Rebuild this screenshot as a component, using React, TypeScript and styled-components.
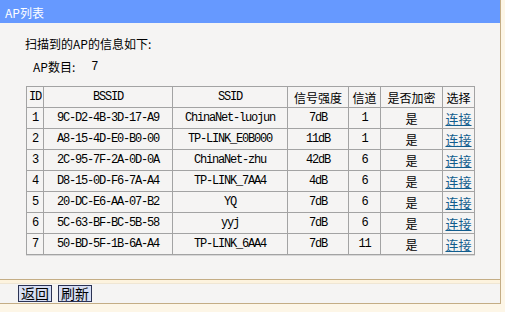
import styled, { createGlobalStyle } from 'styled-components';

interface ApRow {
  id: number;
  bssid: string;
  ssid: string;
  signal: string;
  channel: number;
}

const apList: ApRow[] = [
  { id: 1, bssid: '9C-D2-4B-3D-17-A9', ssid: 'ChinaNet-luojun', signal: '7dB', channel: 1 },
  { id: 2, bssid: 'A8-15-4D-E0-B0-00', ssid: 'TP-LINK_E0B000', signal: '11dB', channel: 1 },
  { id: 3, bssid: '2C-95-7F-2A-0D-0A', ssid: 'ChinaNet-zhu', signal: '42dB', channel: 6 },
  { id: 4, bssid: 'D8-15-0D-F6-7A-A4', ssid: 'TP-LINK_7AA4', signal: '4dB', channel: 6 },
  { id: 5, bssid: '20-DC-E6-AA-07-B2', ssid: 'YQ', signal: '7dB', channel: 6 },
  { id: 6, bssid: '5C-63-BF-BC-5B-58', ssid: 'yyj', signal: '7dB', channel: 6 },
  { id: 7, bssid: '50-BD-5F-1B-6A-A4', ssid: 'TP-LINK_6AA4', signal: '7dB', channel: 11 },
];

const columns = [17, 129, 115, 61, 32, 62, 32];

function App() {
  return (
    <>
      <GlobalStyle />
      <Page>
        <Header>AP列表</Header>
        <Content>
          <Heading>扫描到的AP的信息如下:</Heading>
          <CountLine>
            AP数目:<Count>7</Count>
          </CountLine>
          <Table>
            <colgroup>
              {columns.map((w, i) => (
                <col key={i} style={{ width: w }} />
              ))}
            </colgroup>
            <thead>
              <tr>
                <HeadCell $mono>ID</HeadCell>
                <HeadCell $mono>BSSID</HeadCell>
                <HeadCell $mono>SSID</HeadCell>
                <HeadCell>信号强度</HeadCell>
                <HeadCell>信道</HeadCell>
                <HeadCell>是否加密</HeadCell>
                <HeadCell>选择</HeadCell>
              </tr>
            </thead>
            <tbody>
              {apList.map((ap) => (
                <tr key={ap.id}>
                  <Cell $mono>{ap.id}</Cell>
                  <Cell $mono>{ap.bssid}</Cell>
                  <Cell $mono>{ap.ssid}</Cell>
                  <Cell $mono>{ap.signal}</Cell>
                  <Cell $mono>{ap.channel}</Cell>
                  <Cell>是</Cell>
                  <Cell>
                    <Link href="#">连接</Link>
                  </Cell>
                </tr>
              ))}
            </tbody>
          </Table>
        </Content>
        <Spacer />
        <ButtonBar>
          <Button>返回</Button>
          <Button>刷新</Button>
        </ButtonBar>
      </Page>
    </>
  );
}

const GlobalStyle = createGlobalStyle`
  body {
    margin: 0;
    background: #fdf6e7;
    font-family: "Noto Sans CJK SC", "Liberation Sans", sans-serif;
    font-size: 12px;
    color: #000;
  }
`;

const Page = styled.div`
  display: flex;
  flex-direction: column;
  width: 500px;
  border-right: 1px solid #c4ad85;
`;

const Header = styled.div`
  height: 23px;
  padding-left: 5px;
  background: #6699ff;
  color: #fff;
  font-size: 12px;
  line-height: 25px;
`;

const Content = styled.div`
  display: flex;
  flex-direction: column;
  height: 257px;
  padding: 13px 0 0 25px;
  box-sizing: border-box;
  background: #f5f4f3;
  border-bottom: 1px solid #c4ad85;
`;

const Heading = styled.div`
  line-height: 16px;
  font-size: 12px;
`;

const CountLine = styled.div`
  display: flex;
  margin: 7px 0 0 8px;
  line-height: 16px;
`;

const Count = styled.span`
  margin-left: 16px;
  font-family: "Liberation Mono", monospace;
`;

const Table = styled.table`
  width: 448px;
  margin: 11px 0 0 1px;
  table-layout: fixed;
  border-collapse: collapse;
  border: 1px solid #9a9a9a;
  box-shadow: 0 1px 0 #d8d8d8;
`;

const Cell = styled.td<{ $mono?: boolean }>`
  height: 20px;
  padding: 0;
  border: 1px solid #a3a3a3;
  text-align: center;
  white-space: nowrap;
  overflow: hidden;
  font-size: 12px;
  font-family: ${({ $mono }) =>
    $mono ? '"Liberation Mono", monospace' : '"Noto Sans CJK SC", sans-serif'};
  letter-spacing: ${({ $mono }) => ($mono ? '-1.2px' : '0')};
`;

const HeadCell = styled(Cell).attrs({ as: 'th' })`
  font-weight: normal;
`;

const Link = styled.a`
  color: #115d8e;
  text-decoration: underline;
  font-size: 13px;
`;

const Spacer = styled.div`
  height: 3px;
  background: #fdf3de;
`;

const ButtonBar = styled.div`
  display: flex;
  gap: 6px;
  height: 21px;
  padding: 1px 0 0 18px;
  box-sizing: border-box;
  background: #f5f4f3;
  border-top: 1px solid #efe6d4;
  border-bottom: 1px solid #c4ad85;
`;

const Button = styled.button`
  width: 34px;
  height: 17px;
  padding: 0;
  border: 1px solid #2c3354;
  background: #d6def4;
  color: #000;
  font-family: "Noto Sans CJK SC", sans-serif;
  font-size: 14px;
  line-height: 15px;
`;

export default App;
